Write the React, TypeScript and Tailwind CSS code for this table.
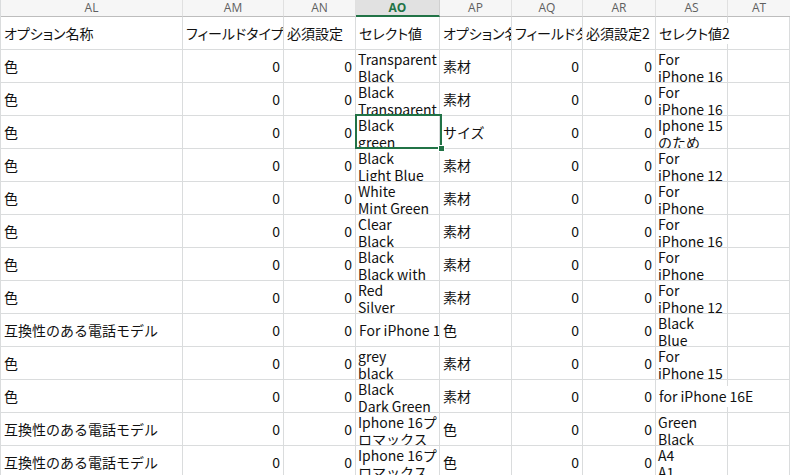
import type { ReactNode } from 'react'

// Column letters and their widths (border included), left to right.
const COLS: { id: string; w: string }[] = [
    { id: 'AL', w: 'w-[182px]' },
    { id: 'AM', w: 'w-[101px]' },
    { id: 'AN', w: 'w-[72px]' },
    { id: 'AO', w: 'w-[84px]' },
    { id: 'AP', w: 'w-[72px]' },
    { id: 'AQ', w: 'w-[71px]' },
    { id: 'AR', w: 'w-[73px]' },
    { id: 'AS', w: 'w-[72px]' },
]

// AS spills into the empty AT column, like Excel does.
const SPILL = 7

type Cell = string | number | string[]

const HEADER: Cell[] = [
    'オプション名称',
    'フィールドタイプ',
    '必須設定',
    'セレクト値',
    'オプション名称',
    'フィールドタイプ',
    '必須設定2',
    'セレクト値2',
]

const PHONE = '互換性のある電話モデル'
const PRO = ['Iphone 16プ', 'ロマックス']

const ROWS: Cell[][] = [
    ['色', 0, 0, ['Transparent', 'Black'], '素材', 0, 0, ['For', 'iPhone 16']],
    ['色', 0, 0, ['Black', 'Transparent'], '素材', 0, 0, ['For', 'iPhone 16']],
    ['色', 0, 0, ['Black', 'green'], 'サイズ', 0, 0, ['Iphone 15', 'のため']],
    ['色', 0, 0, ['Black', 'Light Blue'], '素材', 0, 0, ['For', 'iPhone 12']],
    ['色', 0, 0, ['White', 'Mint Green'], '素材', 0, 0, ['For', 'iPhone']],
    ['色', 0, 0, ['Clear', 'Black'], '素材', 0, 0, ['For', 'iPhone 16']],
    ['色', 0, 0, ['Black', 'Black with'], '素材', 0, 0, ['For', 'iPhone']],
    ['色', 0, 0, ['Red', 'Silver'], '素材', 0, 0, ['For', 'iPhone 12']],
    [PHONE, 0, 0, 'For iPhone 16', '色', 0, 0, ['Black', 'Blue']],
    ['色', 0, 0, ['grey', 'black'], '素材', 0, 0, ['For', 'iPhone 15']],
    ['色', 0, 0, ['Black', 'Dark Green'], '素材', 0, 0, 'for iPhone 16E'],
    [PHONE, 0, 0, PRO, '色', 0, 0, ['Green', 'Black']],
    [PHONE, 0, 0, PRO, '色', 0, 0, ['A4', 'A1']],
]

const GRID = 'border-r border-b border-[#dadcdd]'

function CellBox({
    w,
    spill,
    children,
}: {
    w: string
    spill?: boolean
    children?: ReactNode
}) {
    return (
        <div
            className={`${w} ${GRID} relative h-full shrink-0 ${spill ? 'z-10 overflow-visible' : 'overflow-hidden'}`}
        >
            {children}
        </div>
    )
}

function CellContent({ value }: { value: Cell }) {
    if (typeof value === 'number') {
        return (
            <div className="flex h-full items-center justify-end pr-[3px]">
                {value}
            </div>
        )
    }
    if (Array.isArray(value)) {
        return (
            <div className="flex h-full flex-col overflow-hidden pl-[2px] pt-[1px] leading-[17px] whitespace-nowrap">
                {value.map((line) => (
                    <div key={line}>{line}</div>
                ))}
            </div>
        )
    }
    return (
        <div className="flex h-full items-center whitespace-nowrap pl-[3px]">
            <span className="bg-white pr-[2px]">{value}</span>
        </div>
    )
}

function Row({ cells, head }: { cells: Cell[]; head?: boolean }) {
    return (
        <div
            className={`flex h-[33px] ${head ? "[font-feature-settings:'palt']" : ''}`}
        >
            {COLS.map((c, i) => (
                <CellBox key={c.id} w={c.w} spill={i === SPILL}>
                    <CellContent value={cells[i]} />
                </CellBox>
            ))}
            <div className={`${GRID} h-full flex-1`} />
        </div>
    )
}

export default function App() {
    return (
        <div className="h-[475px] w-[790px] overflow-hidden bg-white text-[#111]">
            {/* column letters */}
            <div className="flex h-[17px] border-l border-[#dadcdd] bg-[#f6f6f6] font-['Open_Sans',sans-serif] text-[12px] leading-[16px] text-[#5f5f5f]">
                {COLS.map((c) =>
                    c.id === 'AO' ? (
                        <div
                            key={c.id}
                            className={`${c.w} shrink-0 border-r border-b-2 border-r-[#d0d0d0] border-b-[#217346] bg-[#e1e1e1] text-center font-bold text-[#217346]`}
                        >
                            {c.id}
                        </div>
                    ) : (
                        <div
                            key={c.id}
                            className={`${c.w} shrink-0 border-r border-b border-r-[#e0e0e0] border-b-[#bdbdbd] text-center`}
                        >
                            {c.id}
                        </div>
                    ),
                )}
                <div className="flex-1 border-b border-[#bdbdbd] text-center">
                    AT
                </div>
            </div>

            {/* sheet body */}
            <div className="relative border-l border-[#dadcdd] font-['Noto_Sans_CJK_JP',sans-serif] text-[14px]">
                <Row cells={HEADER} head />
                {ROWS.map((r, i) => (
                    <Row key={i} cells={r} />
                ))}

                {/* active cell AO4 */}
                <div className="absolute top-[97px] left-[354px] z-20 h-[35px] w-[87px] border-2 border-[#217346]">
                    <div className="absolute -right-[5px] -bottom-[5px] h-[7px] w-[7px] border border-white bg-[#217346]" />
                </div>
            </div>
        </div>
    )
}
